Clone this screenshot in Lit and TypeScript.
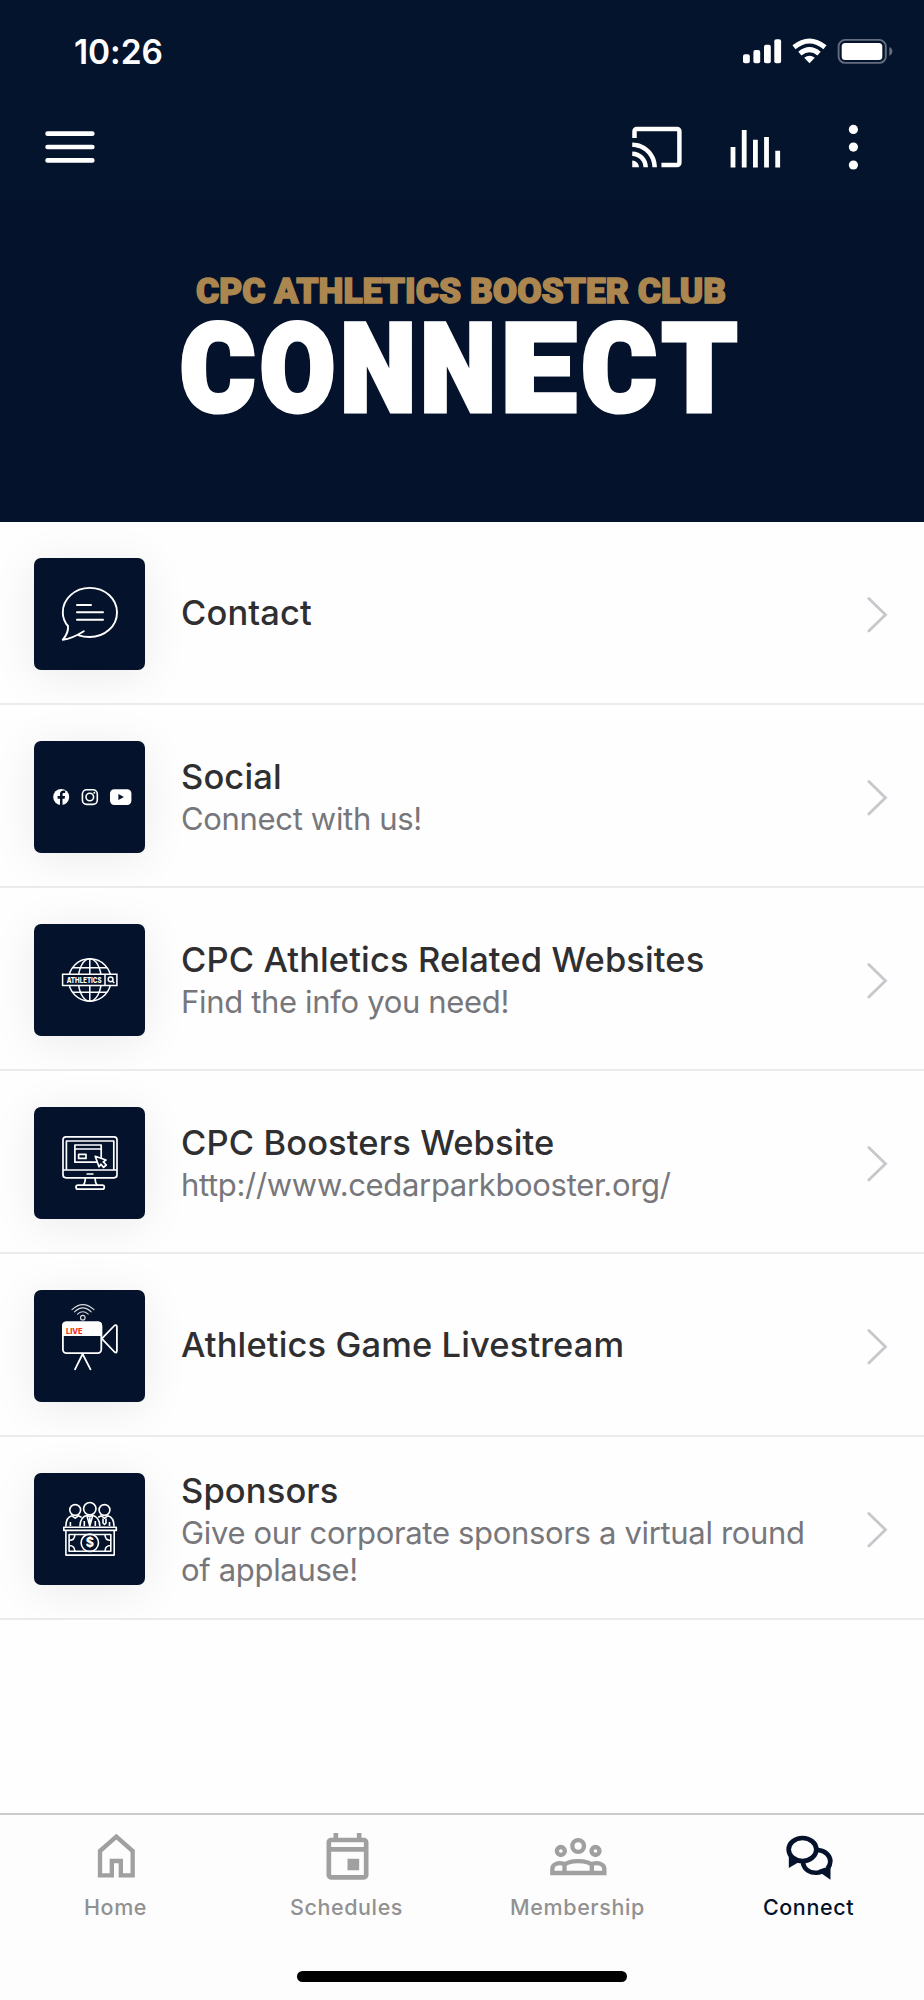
import { LitElement, html, svg, css } from "lit";
import { customElement } from "lit/decorators.js";

const thumbs = {
  contact: svg`<g fill="none" stroke="#fff" stroke-width="1.9" stroke-linecap="round" stroke-linejoin="round">
    <path d="M44.8 77.3C48 78.5 52 79 55.8 79C71 79 83 68 83 54.4S71 29.9 55.8 29.9S28.8 41 28.8 54.4C28.8 59 30.5 64 34 68C34.5 73 32 78 28.8 81.7C36 81 44 77 49.8 73.3"/>
    <path d="M43 47H57M43 54.3H69M43 61.7H69" stroke-width="2"/></g>`,
  social: svg`<circle cx="27.2" cy="56" r="8" fill="#fff"/>
    <path d="M26 64.5V57.8H23.6V55H26V53.2C26 50.6 27.4 49.4 29.6 49.4C30.4 49.4 31.2 49.5 31.2 49.5V52H29.9C28.8 52 28.5 52.6 28.5 53.4V55H31.1L30.6 57.8H28.5V64.5Z" fill="#04122b"/>
    <g fill="none" stroke="#fff" stroke-width="1.6"><rect x="48.4" y="48.8" width="14.9" height="14.6" rx="4.3"/><circle cx="55.8" cy="56" r="3.8"/></g>
    <circle cx="60.3" cy="51.8" r="1" fill="#fff"/>
    <rect x="76" y="48.2" width="21.4" height="15.8" rx="4.2" fill="#fff"/><path d="M84.4 52.9V59.1L89.9 56Z" fill="#04122b"/>`,
  websites: svg`<g fill="none" stroke="#fff" stroke-width="1.5">
    <circle cx="55.8" cy="56" r="21.2"/><ellipse cx="55.8" cy="56" rx="11.5" ry="21.2"/><path d="M55.8 35V77M38.5 43.7H73M38.5 68.3H73"/>
    <path d="M28.6 50.2H82.9V61.6H28.6Z" fill="#04122b"/><path d="M71 50.2V61.6"/><circle cx="76.6" cy="55.3" r="2.4"/><path d="M78.3 57L80.3 59"/></g>
    <text x="32.7" y="58.7" class="tiny" font-size="7.9" textLength="34.8" lengthAdjust="spacingAndGlyphs" fill="#fff">ATHLETICS</text>`,
  monitor: svg`<g fill="none" stroke="#fff" stroke-width="1.7" stroke-linejoin="round">
    <rect x="29" y="29.8" width="54" height="41" rx="3"/><path d="M29 63H83M32.4 63V34H79.8V63M52.5 67H59.5"/>
    <path d="M40.9 38H67.2V55.2H40.9ZM40.9 42H67.2M44.6 47.4H52V51.4H44.6Z"/>
    <path d="M61.2 49.3L72 53L69.3 54.9L72.3 58L69.6 60.4L66.9 57.2L65 59.7Z" fill="#04122b"/>
    <path d="M51.3 71C51.2 75 50.8 77 49 78M61.1 71C61.2 75 61.6 77 63.4 78"/><rect x="42" y="78.2" width="28.3" height="4" rx="2"/></g>`,
  live: svg`<g fill="none" stroke="#fff" stroke-width="1.8" stroke-linecap="round" stroke-linejoin="round">
    <rect x="28.9" y="32.3" width="38.4" height="30.8" rx="3.6"/><path d="M29 45.2V35.5Q29 32.3 32.5 32.3H64Q67.3 32.3 67.3 35.5V45.2Z" fill="#fff"/>
    <path d="M67.8 48.7L80.5 35.5Q82.9 34.2 82.9 37V60.5Q82.9 63.5 80.5 62L67.8 48.7M41 79.3L48.6 64L56.5 79.3"/>
    <g stroke-width="1.1" opacity=".85"><circle cx="48.8" cy="27.7" r="2.3"/><path d="M43.5 24.1Q48.8 19.5 54.2 24.1M40.5 21.9Q48.8 13.9 57.2 21.9M38 19.7Q48.8 9.5 60 19.7"/></g></g>
    <text x="32" y="44.3" class="tiny" font-size="7.8" textLength="16.6" lengthAdjust="spacingAndGlyphs" fill="#f52d12">LIVE</text>`,
  sponsors: svg`<g fill="none" stroke="#fff" stroke-width="1.6" stroke-linejoin="round">
    <circle cx="55.8" cy="35.7" r="6.2"/><circle cx="41.2" cy="37" r="5.4"/><circle cx="70.5" cy="37" r="5.4"/>
    <path d="M31.9 53.5C31.9 46.5 35 43.5 38 42.8L41.2 45.2L44.4 42.8L47.5 44.3M80 53.5C80 46.5 76.7 43.5 73.7 42.8L70.5 45.2L67.3 42.8L64.2 44.3M46 53.5C46 46.5 49.5 43 53.3 42.2L55.8 44L58.3 42.2C62 43 65.8 46.5 65.8 53.5"/>
    <path d="M36.4 53V49M50.3 53V48M61.3 53V48M75.5 53V49M53 43L55.8 53L58.6 43M55.8 45V53M69 45.5V50L70.5 51.5L72 50V45.5"/>
    <path d="M29.8 54.3H82.3V57.4H29.8ZM31.9 57.4V82.1H80.2V57.4M35.1 61.5H76.8V78.2H35.1Z"/><circle cx="55.8" cy="69.8" r="8.7"/>
    <path d="M35.1 67.5Q40.8 67.5 40.8 61.5M71 61.5Q71 67.5 76.8 67.5M35.1 72.5Q40.8 72.5 40.8 78.2M71 78.2Q71 72.5 76.8 72.5"/></g>
    <text x="55.8" y="74.4" class="tiny" font-size="12.5" text-anchor="middle" fill="#fff">$</text>`,
};

const rows = [
  { icon: thumbs.contact, title: "Contact", sub: "" },
  { icon: thumbs.social, title: "Social", sub: "Connect with us!" },
  { icon: thumbs.websites, title: "CPC Athletics Related Websites", sub: "Find the info you need!" },
  { icon: thumbs.monitor, title: "CPC Boosters Website", sub: "http://www.cedarparkbooster.org/" },
  { icon: thumbs.live, title: "Athletics Game Livestream", sub: "" },
  { icon: thumbs.sponsors, title: "Sponsors", sub: "Give our corporate sponsors a virtual round of applause!" },
];

const tabs = [
  { label: "Home", box: "250.5 78 192 180", active: false,
    icon: svg`<path d="M298.5 153L347.5 110L396.5 153V226H361V183H334V226H298.5Z" fill="none" stroke="currentColor" stroke-width="13"/>` },
  { label: "Schedules", box: "943.5 78 192 180", active: false,
    icon: svg`<path transform="translate(957 85) scale(7)" fill="currentColor" d="M19 4h-1V2h-2v2H8V2H6v2H5c-1.11 0-1.99.9-1.99 2L3 20c0 1.1.89 2 2 2h14c1.1 0 2-.9 2-2V6c0-1.1-.9-2-2-2zm0 16H5V10h14v10zm0-12H5V6h14v2zm-7 5h5v5h-5v-5z"/>` },
  { label: "Membership", box: "250.5 78 192 180", active: false,
    icon: svg`<g fill="none" stroke="currentColor" stroke-width="13"><circle cx="347" cy="138" r="17.5"/><circle cx="295" cy="153" r="12"/><circle cx="399" cy="153" r="12"/>
      <path d="M306 219V196C306 190 325 183.5 347 183.5S388 190 388 196V219M306 192C286 185 269.5 193 269.5 207V219H425.5V207C425.5 193 408 185 388 192"/></g>` },
  { label: "Connect", box: "943.5 78 192 180", active: true,
    icon: svg`<g fill="none" stroke="currentColor" stroke-width="14"><ellipse cx="1020" cy="148.500" rx="41.500" ry="34.500"/>
      <path d="M1066 150C1088 152 1103.500 166 1103.500 184C1103.500 194 1100 200 1095 206M1099 211C1090 206 1082 214 1068 217.500C1044 221 1026 210 1021 188"/></g>
      <path d="M979 165V204L1008 187L996 173Z" fill="currentColor"/><path d="M1104 196V239L1076 220L1084 208Z" fill="currentColor"/>` },
];

const connectLetters: [string, number][] = [["C", 180], ["O", 260], ["N", 340.5], ["N", 420.5], ["E", 501], ["C", 581.5], ["T", 662]];

@customElement("app-root")
export class AppRoot extends LitElement {
  static styles = css`
    :host { display: flex; flex-direction: column; height: 2000px; width: 924px; background: #fefefe; font-family: Inter, "Noto Sans", sans-serif; color: #2f2f31; overflow: hidden; }
    * { box-sizing: border-box; }
    svg { display: block; flex: none; }
    header { background: #05142d; height: 198px; color: #fff; }
    .status { display: flex; justify-content: space-between; padding: 36px 28px 0 74px; height: 103.500px; }
    .time { font-size: 33.500px; line-height: 32px; font-weight: 600; letter-spacing: -0.1px; }
    .nav { display: flex; align-items: center; padding: 0 62px 0 43px; height: 87px; }
    .nav .right { margin-left: auto; display: flex; align-items: center; }
    .hero { background: #04122b; height: 324px; }
    .heavy { font-family: Roboto, sans-serif; font-weight: 900; }
    .row { height: 183px; border-bottom: 2px solid #ebebec; padding: 0 34px 0 33.500px; display: flex; position: relative; overflow: hidden; }
    .thumb { width: 111.500px; height: 111.500px; margin-top: 36px; border-radius: 7px; background: #04122b; box-shadow: 0 6px 46px rgba(0,0,0,.08); flex: none; }
    .tiny { font-family: Inter, sans-serif; font-weight: 800; }
    .text { margin-left: 36px; width: 640px; padding-top: 1px; display: flex; flex-direction: column; justify-content: center; }
    .title { font-size: 34.500px; line-height: 44px; font-weight: 500; white-space: nowrap; letter-spacing: .12px; }
    .sub { font-size: 31px; line-height: 37px; color: #77777b; letter-spacing: -.33px; padding-top: 1px; }
    .chev { margin: 72px 0 0 auto; }
    .tabs { margin-top: auto; height: 187px; border-top: 2px solid #cbcbcb; background: #fdfdfd; display: flex; flex-direction: column; align-items: center; }
    .items { display: grid; grid-template-columns: repeat(4, 1fr); width: 100%; height: 156px; }
    .tab { display: flex; flex-direction: column; align-items: center; padding-top: 11px; color: #a0a0a0; font-size: 21.500px; line-height: 26px; letter-spacing: .6px; font-weight: 500; }
    .tab span { margin-top: 8px; color: #919191; }
    .tab.active, .tab.active span { color: #04122b; }
    .bar { width: 330px; height: 11px; border-radius: 6px; background: #000; }
  `;

  render() {
    return html`
      <header>
        <div class="status">
          <span class="time">10:26</span>
          <svg width="156" height="32" viewBox="740 36 156 32">
            <g fill="#fff">
              <rect x="743" y="54.300" width="6.800" height="9" rx="2"/><rect x="753.400" y="50" width="6.800" height="13.300" rx="2"/>
              <rect x="764" y="44.700" width="6.800" height="18.600" rx="2"/><rect x="774.300" y="39.300" width="6.800" height="24" rx="2"/>
              <path d="M809.500 63.300L804.200 57.800Q809.500 53.700 814.800 57.800Z"/>
              <rect x="841.700" y="43" width="40.600" height="17" rx="3.500"/>
            </g>
            <g fill="none" stroke="#fff" stroke-width="5"><path d="M799.900 53.600Q809.500 45.800 819.100 53.600M794 47.200Q809.500 34.800 825 47.200"/></g>
            <rect x="838.600" y="39.900" width="47.200" height="23" rx="6.500" fill="none" stroke="#646d7f" stroke-width="1.900"/>
            <path d="M889.300 47Q892.400 48.500 892.400 51.400T889.300 55.800Z" fill="#646d7f"/>
          </svg>
        </div>
        <div class="nav">
          <svg width="54" height="54" viewBox="43 120.300 54 54"><path d="M47.600 134H92.300M47.600 147.300H92.300M47.600 160.700H92.300" stroke="#fff" stroke-width="4.700" stroke-linecap="round"/></svg>
          <div class="right">
            <svg width="232" height="54" viewBox="630 120.300 232 54" fill="#fff">
              <path transform="translate(630 120.300) scale(2.245)" d="M21 3H3c-1.100 0-2 .9-2 2v3h2V5h18v14h-7v2h7c1.100 0 2-.9 2-2V5c0-1.100-.9-2-2-2zM1 18v3h3c0-1.660-1.340-3-3-3zm0-4v2c2.760 0 5 2.240 5 5h2c0-3.870-3.130-7-7-7zm0-4v2c4.970 0 9 4.030 9 9h2c0-6.080-4.930-11-11-11z"/>
              <path d="M733 167.700V147.300M744.200 167.700V130.300M755.400 167.700V140M766.500 167.700V137.300M777.700 167.700V151" stroke="#fff" stroke-width="4.800"/>
              <circle cx="853.400" cy="129.700" r="4.600"/><circle cx="853.400" cy="147.400" r="4.600"/><circle cx="853.400" cy="165.300" r="4.600"/>
            </svg>
          </div>
        </div>
      </header>
      <section class="hero">
        <svg width="924" height="324" viewBox="0 198 924 324">
          <text class="heavy" x="196" y="303" font-size="35.500" textLength="530" lengthAdjust="spacingAndGlyphs" fill="#ab864f" stroke="#ab864f" stroke-width="1.500">CPC ATHLETICS BOOSTER CLUB</text>
          <text class="heavy" y="410.500" font-size="122.500" fill="#fff" stroke="#fff" stroke-width="5">${connectLetters.map(
            ([c, x]) => svg`<tspan x=${x} textLength="75" lengthAdjust="spacingAndGlyphs">${c}</tspan>`
          )}</text>
        </svg>
      </section>
      <main>
        ${rows.map(
          (r) => html`<div class="row">
            <div class="thumb"><svg width="111.500" height="111.500" viewBox="0 0 111.500 111.500">${r.icon}</svg></div>
            <div class="text"><div class="title">${r.title}</div>${r.sub ? html`<div class="sub">${r.sub}</div>` : ""}</div>
            <svg class="chev" width="26" height="41" viewBox="864 594 26 41"><path d="M868.800 598.500L885.500 614.700L868.800 630.900" fill="none" stroke="#c7c7cc" stroke-width="2.800" stroke-linecap="round"/></svg>
          </div>`
        )}
      </main>
      <nav class="tabs">
        <div class="items">
          ${tabs.map(
            (t) => html`<div class="tab ${t.active ? "active" : ""}"><svg width="64" height="60" viewBox=${t.box}>${t.icon}</svg><span>${t.label}</span></div>`
          )}
        </div>
        <div class="bar"></div>
      </nav>
    `;
  }
}
